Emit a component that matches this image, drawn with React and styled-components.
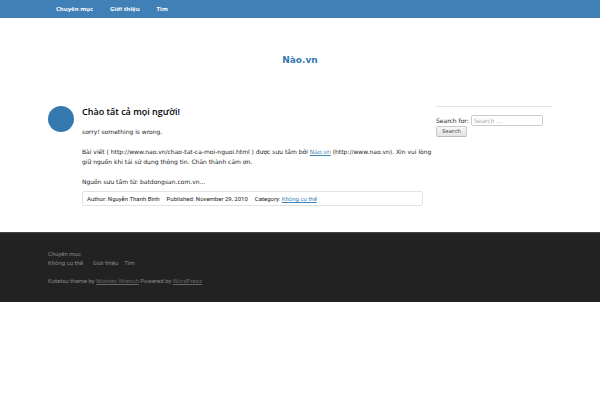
import React from 'react';
import styled, { createGlobalStyle } from 'styled-components';

const GlobalStyle = createGlobalStyle`
  * { box-sizing: border-box; }
  body {
    margin: 0;
    background: #fff;
    color: #222;
    font-family: "DejaVu Sans", "Noto Sans", sans-serif;
    font-size: 6px;
    line-height: 10px;
  }
`;

const NavBar = styled.nav`
  background: #4180b6;
  padding: 4px 8%;
`;

const NavList = styled.ul`
  display: flex;
  gap: 17px;
  list-style: none;
  margin: 0;
  padding: 0 8px;
  font-family: "Open Sans", sans-serif;
  line-height: 10px;
`;

const NavLink = styled.a`
  color: #fff;
  font-weight: 700;
  text-decoration: none;
`;

const Masthead = styled.header`
  padding: 34px 8% 38px;
  text-align: center;
`;

const SiteTitle = styled.h1`
  margin: 0;
  font-size: 9px;
  line-height: 16px;
`;

const SiteLink = styled.a`
  color: #3579b1;
  text-decoration: none;
`;

const Content = styled.div`
  display: flex;
  gap: 4px;
  padding: 0 8% 26px;
`;

const Main = styled.main`
  display: flex;
  flex: 1;
  gap: 8px;
  min-width: 0;
`;

const PostBadge = styled.span`
  flex: none;
  width: 26px;
  height: 26px;
  border-radius: 50%;
  background: #3579b1;
`;

const Post = styled.article`
  flex: 1;
  min-width: 0;
`;

const PostTitle = styled.h2`
  margin: 0 0 9px;
  color: #000;
  font-family: "Open Sans", sans-serif;
  font-size: 9px;
  font-weight: 600;
  line-height: 12px;
`;

const Paragraph = styled.p`
  margin: 0 0 10px;
`;

const TextLink = styled.a`
  color: #3f86b8;
`;

const Meta = styled.footer`
  display: flex;
  gap: 7px;
  margin: -6px 9px 0 0;
  padding: 0 4px;
  border: 1px solid #e2e2e2;
  border-radius: 2px;
  font-family: Roboto, sans-serif;
  line-height: 13px;
`;

const Sidebar = styled.aside`
  width: 116px;
  padding-top: 8px;
  border-top: 1px solid #e2e2e2;
`;

const SearchForm = styled.form`
  display: flex;
  flex-wrap: wrap;
  align-items: center;
  column-gap: 2px;
`;

const SearchInput = styled.input`
  width: 72px;
  height: 11px;
  padding: 0 2px;
  border: 1px solid #ccc;
  border-radius: 2px;
  background: #fff;
  color: #666;
  font: inherit;
  &::placeholder { color: #aaa; }
`;

const SearchButton = styled.button`
  height: 11px;
  padding: 0 5px;
  border: 1px solid #ccc;
  border-bottom-color: #bbb;
  border-radius: 2px;
  background: linear-gradient(#f6f6f6, #e4e4e4);
  color: #444;
  font-family: "Open Sans", sans-serif;
  font-size: 6px;
  line-height: 9px;
`;

const Footer = styled.footer`
  padding: 16px 8% 17px;
  border-top: 1px solid #444;
  background: #222;
  color: #888;
  font-family: Roboto, sans-serif;
  line-height: 9px;
`;

const FooterNav = styled.ul`
  display: flex;
  flex-wrap: wrap;
  margin: 0 0 9px;
  padding: 0;
  list-style: none;
`;

const FooterItem = styled.li`
  flex-basis: ${({ $full }) => ($full ? '100%' : 'auto')};
  margin-right: ${({ $gap }) => $gap || 0}px;
`;

const FooterLink = styled.a`
  color: ${({ $credit }) => ($credit ? '#666' : 'inherit')};
  text-decoration: ${({ $credit }) => ($credit ? 'underline' : 'none')};
`;

const Credits = styled.p`
  margin: 0;
`;

export default function App() {
  return (
    <>
      <GlobalStyle />
      <NavBar>
        <NavList>
          <li><NavLink href="#categories">Chuyên mục</NavLink></li>
          <li><NavLink href="#about">Giới thiệu</NavLink></li>
          <li><NavLink href="#search">Tìm</NavLink></li>
        </NavList>
      </NavBar>
      <Masthead>
        <SiteTitle><SiteLink href="#home">Nào.vn</SiteLink></SiteTitle>
      </Masthead>
      <Content>
        <Main>
          <PostBadge />
          <Post>
            <PostTitle>Chào tất cả mọi người!</PostTitle>
            <Paragraph>sorry! something is wrong.</Paragraph>
            <Paragraph>
              Bài viết ( http://www.nao.vn/chao-tat-ca-moi-nguoi.html ) được sưu tầm bởi{' '}
              <TextLink href="#nao">Nào.vn</TextLink> (http://www.nao.vn). Xin vui lòng giữ nguồn
              khi tái sử dụng thông tin. Chân thành cảm ơn.
            </Paragraph>
            <Paragraph>Nguồn sưu tầm từ: batdongsan.com.vn…</Paragraph>
            <Meta>
              <span>Author: Nguyễn Thanh Bình</span>
              <span>Published: November 29, 2010</span>
              <span>Category: <TextLink href="#category">Không cụ thể</TextLink></span>
            </Meta>
          </Post>
        </Main>
        <Sidebar>
          <SearchForm role="search">
            <label htmlFor="search">Search for:</label>
            <SearchInput id="search" type="text" placeholder="Search …" />
            <SearchButton type="button">Search</SearchButton>
          </SearchForm>
        </Sidebar>
      </Content>
      <Footer>
        <FooterNav>
          <FooterItem $full><FooterLink href="#categories">Chuyên mục</FooterLink></FooterItem>
          <FooterItem $gap={10}><FooterLink href="#general">Không cụ thể</FooterLink></FooterItem>
          <FooterItem $gap={6}><FooterLink href="#about">Giới thiệu</FooterLink></FooterItem>
          <FooterItem><FooterLink href="#search">Tìm</FooterLink></FooterItem>
        </FooterNav>
        <Credits>
          Kotetsu theme by <FooterLink $credit href="#theme">Monkey Wrench</FooterLink> Powered by{' '}
          <FooterLink $credit href="#wordpress">WordPress</FooterLink>
        </Credits>
      </Footer>
    </>
  );
}
